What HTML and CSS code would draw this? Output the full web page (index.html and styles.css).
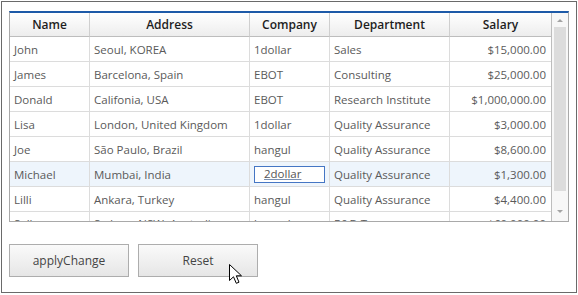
FILE: index.html
```html
<!DOCTYPE html>
<html lang="en">
<head>
  <meta charset="UTF-8">
  <meta name="viewport" content="width=device-width, initial-scale=1.0">
  <title>Grid - applyChange</title>
  <link rel="stylesheet" href="styles.css">
</head>
<body>

  <div class="frame">
    <div class="grid">
      <div class="grid-body">
        <table class="grid-table">
          <colgroup>
            <col class="c-name"><col class="c-addr"><col class="c-comp"><col class="c-dept"><col class="c-sal">
          </colgroup>
          <thead>
            <tr>
              <th>Name</th>
              <th>Address</th>
              <th>Company</th>
              <th>Department</th>
              <th class="last">Salary</th>
            </tr>
          </thead>
          <tbody>
            <tr><td>John</td><td>Seoul, KOREA</td><td>1dollar</td><td>Sales</td><td class="num">$15,000.00</td></tr>
            <tr><td>James</td><td>Barcelona, Spain</td><td>EBOT</td><td>Consulting</td><td class="num">$25,000.00</td></tr>
            <tr><td>Donald</td><td>Califonia, USA</td><td>EBOT</td><td>Research Institute</td><td class="num">$1,000,000.00</td></tr>
            <tr><td>Lisa</td><td>London, United Kingdom</td><td>1dollar</td><td>Quality Assurance</td><td class="num">$3,000.00</td></tr>
            <tr><td>Joe</td><td>São Paulo, Brazil</td><td>hangul</td><td>Quality Assurance</td><td class="num">$8,600.00</td></tr>
            <tr class="selected">
              <td>Michael</td><td>Mumbai, India</td>
              <td class="editing"><span class="editor">2dollar</span></td>
              <td>Quality Assurance</td><td class="num">$1,300.00</td>
            </tr>
            <tr><td>Lilli</td><td>Ankara, Turkey</td><td>hangul</td><td>Quality Assurance</td><td class="num">$4,400.00</td></tr>
            <tr class="partial"><td>Sally</td><td>Sydney, NSW, Australia</td><td>hangul</td><td>R&amp;D Team</td><td class="num">$60,000.00</td></tr>
          </tbody>
        </table>
      </div>
      <div class="scrollbar">
        <div class="arrow up"></div>
        <div class="thumb"></div>
        <div class="arrow down"></div>
      </div>
    </div>

    <div class="buttons">
      <button class="btn">applyChange</button>
      <button class="btn">Reset</button>
    </div>

    <!-- mouse pointer over the Reset button -->
    <svg class="cursor" width="14" height="22" viewBox="0 0 14 22">
      <path d="M0.5 0.5 L0.5 16.5 L4.5 12.8 L7.3 19.3 L10 18.2 L7.3 11.8 L12.5 11.8 Z" fill="#fff" stroke="#000" stroke-width="1"/>
    </svg>
  </div>

</body>
</html>
```

FILE: styles.css
```css
body {
  margin: 0;
  font-family: "Open Sans", "Noto Sans", sans-serif;
  font-size: 11.5px;
  background: #fff;
}

.frame {
  position: relative;
  margin: 1px 0 0 1px;
  width: 576px;
  height: 292px;
  border: 1px solid #6a6a6a;
  padding: 9px 0 0 7px;
  box-sizing: border-box;
}

/* grid */
.grid {
  display: flex;
  width: 560px;
  height: 211px;
  border: 1px solid #a9a9a9;
  border-top: 2px solid #1d5aa8;
  box-sizing: border-box;
  overflow: hidden;
}

.grid-body {
  width: 541px;
  height: 208px;
  overflow: hidden;
}

.grid-table {
  width: 541px;
  table-layout: fixed;
  border-collapse: separate;
  border-spacing: 0;
}

.c-name { width: 80px; }
.c-addr { width: 160px; }
.c-comp { width: 80px; }
.c-dept { width: 120px; }
.c-sal { width: 101px; }

.grid-table th {
  height: 23px;
  padding: 0;
  font-size: 12px;
  font-weight: 600;
  color: #1e1e1e;
  text-align: center;
  background: linear-gradient(#ffffff, #ededed);
  border-right: 1px solid #cfcfcf;
  border-bottom: 1px solid #bdbdbd;
}

.grid-table td {
  height: 24px;
  padding: 0 5px 0 4px;
  color: #5a5a5a;
  white-space: nowrap;
  overflow: hidden;
  border-right: 1px solid #dcdcdc;
  border-bottom: 1px solid #dcdcdc;
}

/* last row is only half scrolled into view */
.grid-table tr.partial td {
  vertical-align: top;
  padding-top: 4px;
}

.grid-table th.last,
.grid-table td.num {
  border-right: none;
}

.grid-table td.num {
  text-align: right;
}

.grid-table tr.selected td {
  background: #eef5fc;
}

.grid-table td.editing {
  padding: 0 4px;
}

.editor {
  display: block;
  height: 15px;
  line-height: 14px;
  padding-left: 9px;
  border: 1px solid #4576c4;
  background: #fff;
  color: #555;
  text-decoration: underline;
  text-decoration-color: #7a8fb0;
}

/* scrollbar */
.scrollbar {
  width: 17px;
  border-left: 1px solid #bdbdbd;
  box-sizing: border-box;
  background: #f7f7f7;
  display: flex;
  flex-direction: column;
  align-items: center;
}

.arrow {
  width: 0;
  height: 0;
  border-left: 3px solid transparent;
  border-right: 3px solid transparent;
}

.arrow.up {
  margin-top: 6px;
  border-bottom: 3px solid #a3a3a3;
}

.arrow.down {
  margin-top: 19px;
  border-top: 3px solid #a3a3a3;
}

.thumb {
  width: 12px;
  height: 164px;
  margin-top: 5px;
  background: #dcdcdc;
}

/* buttons */
.buttons {
  display: flex;
  gap: 9px;
  margin-top: 22px;
}

.btn {
  width: 120px;
  height: 33px;
  font-family: inherit;
  font-size: 12px;
  color: #444;
  background: linear-gradient(#fafafa, #e6e6e6);
  border: 1px solid #adadad;
  border-radius: 0;
  padding: 0;
}

.cursor {
  position: absolute;
  left: 227px;
  top: 262px;
}
```
